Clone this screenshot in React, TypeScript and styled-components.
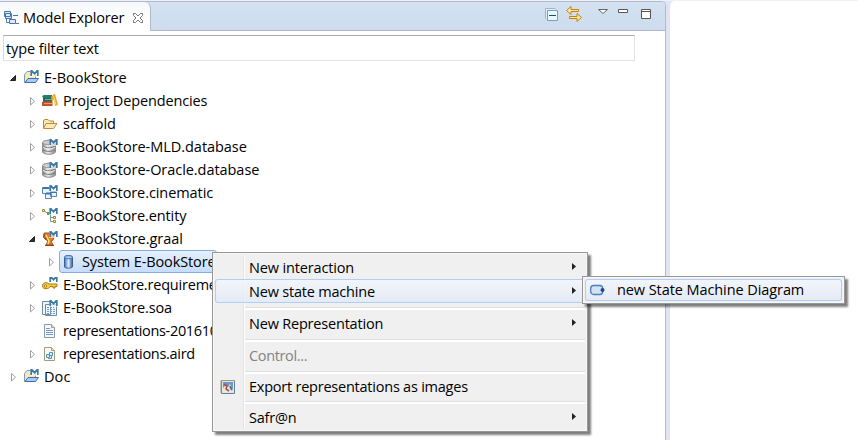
import React from "react";
import styled, { createGlobalStyle, css } from "styled-components";

const Global = createGlobalStyle`
  * { box-sizing: border-box; }
  body { margin: 0; background: #fff; overflow: hidden; }
  svg { display: block; flex: none; }
`;

const Workbench = styled.div`
  position: relative;
  display: flex;
  width: 858px;
  height: 440px;
  padding-top: 1px;
  overflow: hidden;
  background: linear-gradient(#eef1f9 0 1px, #e0e5f6 1px);
  color: #000;
  font: 14.5px/23px "Open Sans", "Noto Sans", sans-serif;
  white-space: pre;
`;

const Text = styled.span<{ $spacing?: number }>`
  letter-spacing: ${(p) => p.$spacing ?? -0.2}px;
`;

const View = styled.section`
  display: flex;
  flex-direction: column;
  width: 666px;
  border: 1px solid #b1b9cb;
  border-width: 1px 1px 0 0;
  border-top-right-radius: 5px;
  background: #fff;
  overflow: hidden;
`;

const TabBar = styled.header`
  display: flex;
  justify-content: space-between;
  flex: none;
  height: 29px;
  background: linear-gradient(#d3e1f0, #cddcee);
  box-shadow: inset 0 -1px #b1b9cb;
`;

const Tab = styled.div`
  display: flex;
  align-items: center;
  width: 151px;
  padding: 2px 0 0 3px;
  border-right: 1px solid #b1b9cb;
  border-top-right-radius: 6px;
  background: linear-gradient(#f5f8fc, #fff 70%);
  line-height: 26px;

  ${Text} { width: 109px; margin-left: 4px; }
`;

const Toolbar = styled.div`
  display: flex;
  align-items: flex-start;
  padding: 4px 13px 0 0;
`;

const ToolSlot = styled.span<{ $width: number; $lift?: number }>`
  width: ${(p) => p.$width}px;
  margin-top: ${(p) => -(p.$lift ?? 0)}px;
`;

const Filter = styled.div`
  flex: none;
  width: 632px;
  height: 26px;
  margin: 4px 0 5px 3px;
  padding: 1px 2px;
  border: 1px solid #e2e3ea;
  border-top-color: #abadb3;
  border-left-color: #d5d9e2;
`;

const TreeRow = styled.div<{ $level: number }>`
  display: flex;
  align-items: center;
  height: 23px;
  padding-left: ${(p) => 9 + p.$level * 19}px;
`;

const Arrow = styled.span`
  display: flex;
  width: 14px;
  flex: none;
`;

const Entry = styled.span<{ $selected?: boolean }>`
  display: flex;
  align-items: center;
  gap: 5px;
  height: 23px;
  ${(p) =>
    p.$selected &&
    css`
      width: 158px;
      margin-left: -2px;
      padding: 0 1px;
      border: 1px solid #84acdd;
      border-radius: 3px;
      background: linear-gradient(#e6f0fd, #c6ddfa);
      line-height: 21px;
    `}
`;

const Editor = styled.main`
  flex: 1;
  margin-left: 4px;
  border-top-left-radius: 5px;
  background: #fff;
`;

const Menu = styled.div<{ $x: number; $y: number; $width: number }>`
  position: absolute;
  left: ${(p) => p.$x}px;
  top: ${(p) => p.$y}px;
  width: ${(p) => p.$width}px;
  padding: 2px;
  border: 1px solid #979797;
  background: #f0f0f0;
  box-shadow: inset 0 0 0 1px #f7f7f7, 3px 3px 2px rgba(0, 0, 0, 0.5);
`;

const Gutter = styled.div`
  background: linear-gradient(90deg, transparent 28px, #e2e3e3 28px 29px, #fff 29px 30px, transparent 30px);
`;

const MenuItem = styled.div<{ $height?: number; $active?: boolean; $disabled?: boolean; $gap?: number }>`
  display: grid;
  grid-template-columns: ${(p) => p.$gap ?? 34}px 1fr 14px;
  align-items: center;
  height: ${(p) => p.$height ?? 24}px;
  line-height: 22px;
  color: ${(p) => (p.$disabled ? "#838383" : "#000")};
  ${(p) =>
    p.$active &&
    css`
      border-radius: 3px;
      box-shadow: inset 0 0 0 1px #aecff7;
      background: linear-gradient(rgba(244, 247, 252, 0.8), rgba(224, 233, 246, 0.8));
    `}

  ${Text} { padding-top: ${(p) => (p.$height ? 0 : 2)}px; }
`;

const ItemIcon = styled.span`
  padding-left: 5px;
`;

const Separator = styled.div<{ $height?: number; $offset?: number }>`
  height: ${(p) => p.$height ?? 8}px;
  padding: ${(p) => p.$offset ?? 4}px 0 0 30px;

  &::before {
    content: "";
    display: block;
    height: 2px;
    border-top: 1px solid #e0e0e0;
    background: #fff;
  }
`;

const Icon = ({ children, size = 16 }: { children: React.ReactNode; size?: number }) => (
  <svg width={size} height={size} viewBox={`0 0 ${size} ${size}`} fill="none">{children}</svg>
);

const ModelMark = ({ x = 7, y = 0 }: { x?: number; y?: number }) => (
  <g transform={`translate(${x} ${y})`}>
    <path d="M0 0H9V8H0Z" fill="#fff" opacity=".6" />
    <path d="M1.2 7V1L4.5 4.8L7.8 1V7" stroke="#3a78a5" strokeWidth="1.7" />
  </g>
);

const ProjectIcon = () => (
  <Icon>
    <path d="M1.5 12.5V4.5L4 1.5H8L9.5 3H12.5V12.5Z" fill="#f9e8b0" stroke="#7798c8" />
    <path d="M2 12.5L5 8.5H15.5L12.5 12.5Z" fill="#abc9ef" stroke="#3f6faf" />
    <ModelMark y={-1} />
  </Icon>
);
const BooksIcon = () => (
  <Icon>
    <path d="M0 3L2 2H10V5H1Z" fill="#23815c" />
    <path d="M1 5H10V9H1Z" fill="#275e79" />
    <path d="M3 6.5H10" stroke="#70bb8d" />
    <path d="M0 9L2 8.5H10.5V13H0Z" fill="#c65327" />
    <path d="M2 10.5H10" stroke="#e5986b" />
    <path d="M9 4L12 1H13L16 12L13 13L12 6L10 9Z" fill="#eba323" />
    <path d="M11.5 3L14 12" stroke="#ffd77d" />
  </Icon>
);
const FolderIcon = () => (
  <Icon>
    <path d="M1.5 12V4.5L3 3.5H6L7.5 5H11.5V7" fill="#fbe8ae" stroke="#ba863b" />
    <path d="M1.5 12.5L4 7.5H15L11.5 12.5Z" fill="#ffeab6" stroke="#c58c3b" />
  </Icon>
);
const DatabaseIcon = () => (
  <Icon>
    <defs>
      <linearGradient id="steel"><stop stopColor="#888" /><stop offset=".4" stopColor="#f0f0f0" /><stop offset="1" stopColor="#888" /></linearGradient>
    </defs>
    <path d="M.5 3.5V13C2 16 12 16 13.5 13V3.5C12 .5 2 .5 .5 3.5Z" fill="url(#steel)" stroke="#8b8d8e" />
    <ellipse cx="7" cy="3.5" rx="6.5" ry="2.2" fill="#ccc" stroke="#999" />
    <path d="M1 7C3 9.5 11 9.5 13 7M1 10.5C3 13 11 13 13 10.5" stroke="#777" />
    <path d="M1 8C3 10.5 11 10.5 13 8" stroke="#eee" />
    <ModelMark y={-1} />
  </Icon>
);
const CinematicIcon = () => (
  <Icon>
    <path d="M.5 2.5H8.5V8.5H.5ZM3.5 8.5H9.5V13.5H3.5ZM8.5 6.5H14.5V11.5H8.5Z" fill="#e9f3ff" stroke="#5b83b6" />
    <path d="M1 3H8M4 8.5H9M9 7H14" stroke="#3e72ad" strokeWidth="1.8" />
    <ModelMark y={-1} />
  </Icon>
);
const EntityIcon = () => (
  <Icon>
    <path d="M3 3.5L6 5.5H8.5V13.5H11M8.5 9.5H11" stroke="#7a9988" />
    <path d="M.5 1.5H2.5V3.5H.5ZM11.5 8.5H13.5V10.5H11.5ZM11.5 12.5H13.5V14.5H11.5Z" fill="#fff8c8" stroke="#a18724" />
    <path d="M5 4H8V7H5Z" fill="#51a071" />
    <ModelMark y={-1} />
  </Icon>
);
const GraalIcon = () => (
  <Icon>
    <path d="M2 2H13L11 9L9 10L11 14H4L6 10L3 8Z" fill="#df8127" stroke="#a84d16" />
    <path d="M4 4L6 8L7 10L6 13" stroke="#ffdf79" strokeWidth="1.5" />
    <path d="M2 3C0 8 4 8 5 8M3 14.5H12" stroke="#9c3d18" />
    <ModelMark y={-1} />
  </Icon>
);
const SystemIcon = () => (
  <Icon>
    <defs><linearGradient id="cylinder"><stop stopColor="#466eb0" /><stop offset=".5" stopColor="#d9edff" /><stop offset="1" stopColor="#305897" /></linearGradient></defs>
    <path d="M3.5 3V13C4 14.5 10 14.5 11.5 13V3C10 1 5 1 3.5 3Z" fill="url(#cylinder)" stroke="#355f9e" />
    <ellipse cx="7.5" cy="3.2" rx="4" ry="1.6" fill="#aacbed" stroke="#4773ae" />
  </Icon>
);
const KeyIcon = () => (
  <Icon>
    <path d="M7 7H15V9.5H13V11H11V9.5H8C7 12.5 1 12.5 .5 9.5C0 5.5 5 4.5 7 7Z" fill="#f5ce3e" stroke="#a87718" />
    <circle cx="3.5" cy="9" r="1.2" fill="#fff" stroke="#a87718" />
    <ModelMark y={-2} />
  </Icon>
);
const SoaIcon = () => (
  <Icon>
    <path d="M.5 1.5H8.5V14.5H.5ZM3.5 4.5H14.5V15.5H3.5Z" fill="#f1f6fa" stroke="#688ca9" />
    <path d="M5 7.5H12M5 9.5H13M5 11.5H13M5 13.5H13" stroke="#739bc0" strokeDasharray="2 1" />
    <ModelMark y={-1} />
  </Icon>
);
const DocumentIcon = ({ diagram = false }: { diagram?: boolean }) => (
  <Icon>
    <path d="M2.5 1.5H9.5L12.5 4.5V14.5H2.5Z" fill="#f5f9ff" stroke={diagram ? "#a59a70" : "#8b98ad"} />
    <path d="M9.5 1.5V4.5H12.5" fill="#ebd79c" stroke="#b59d66" />
    {diagram ? <path d="M7.5 6.5H10.5V9.5H7.5ZM4.5 8.5H7.5V11.5H4.5ZM7.5 9.5H9.5V12.5H6.5V11.5" fill="#d8edf9" stroke="#4c95c1" /> :
      <path d="M4 5.5H8M4 7.5H11M4 9.5H11M4 11.5H11" stroke="#7899c8" />}
  </Icon>
);
const TreeTwist = ({ open }: { open?: boolean }) => (
  <Icon size={10}>{open ? <path d="M6.5 2.5V7.5H1.5Z" fill="#333" stroke="#222" /> : <path d="M2.5 1.5V9L6.5 5.25Z" fill="#fff" stroke="#a0a0a0" />}</Icon>
);
const MenuArrow = () => <Icon size={10}><path d="M1 1V8L5 4.5Z" fill="#222" /></Icon>;

const rows = [
  { label: "E-BookStore", level: 0, icon: <ProjectIcon />, open: true, spacing: -0.03 },
  { label: "Project Dependencies", level: 1, icon: <BooksIcon />, spacing: -0.15 },
  { label: "scaffold", level: 1, icon: <FolderIcon />, spacing: 0 },
  { label: "E-BookStore-MLD.database", level: 1, icon: <DatabaseIcon />, spacing: -0.04 },
  { label: "E-BookStore-Oracle.database", level: 1, icon: <DatabaseIcon />, spacing: -0.05 },
  { label: "E-BookStore.cinematic", level: 1, icon: <CinematicIcon />, spacing: -0.08 },
  { label: "E-BookStore.entity", level: 1, icon: <EntityIcon />, spacing: -0.1 },
  { label: "E-BookStore.graal", level: 1, icon: <GraalIcon />, open: true, spacing: -0.03 },
  { label: "System E-BookStore", level: 2, icon: <SystemIcon />, selected: true, spacing: -0.12 },
  { label: "E-BookStore.requirement", level: 1, icon: <KeyIcon />, spacing: -0.2 },
  { label: "E-BookStore.soa", level: 1, icon: <SoaIcon />, spacing: -0.1 },
  { label: "representations-20161017", level: 1, icon: <DocumentIcon />, leaf: true, spacing: -0.33 },
  { label: "representations.aird", level: 1, icon: <DocumentIcon diagram />, spacing: -0.3 },
  { label: "Doc", level: 0, icon: <ProjectIcon />, spacing: 0.1 },
];

export default function App() {
  return (
    <>
      <Global />
      <Workbench>
        <View>
          <TabBar>
            <Tab>
              <Icon>
                <path d="M1.5 1.5H7.5V6.5H1.5ZM2.5 3.5H8.5V8.5H2.5ZM6.5 9.5H12.5V13.5H6.5Z" fill="#dceaff" stroke="#4875ae" />
                <path d="M10 5.5H15M3.5 9V12.5H6M13 13.5H16" stroke="#4875ae" />
              </Icon>
              <Text $spacing={-0.12}>Model Explorer</Text>
              <Icon size={12}><path d="M1.5 1.5H3.5L6 4L8.5 1.5H10.5V3.5L8 6L10.5 8.5V10.5H8.5L6 8L3.5 10.5H1.5V8.5L4 6L1.5 3.5Z" fill="#fff" stroke="#777" /></Icon>
            </Tab>
            <Toolbar>
              <ToolSlot $width={22}>
                <Icon><path d="M1.5 12.5V2.5H11.5" stroke="#9db6c7" /><path d="M2 3H11V12H2Z" fill="#dfeff8" /><path d="M3.5 4.5H13.5V14.5H3.5Z" fill="#e9f8ff" stroke="#7d9eb6" /><path d="M5 9.5H12" stroke="#10537e" /></Icon>
              </ToolSlot>
              <ToolSlot $width={31}>
                <Icon><path d="M.5 4.5L5 .5V3.5H12.5V5.5H5V8.5ZM15.5 11.5L11 7.5V10.5H3.5V12.5H11V15.5Z" fill="#ffe99e" stroke="#c38213" /></Icon>
              </ToolSlot>
              <ToolSlot $width={20} $lift={1}><Icon size={12}><path d="M1.5 4.5H10.5L6 8.5Z" fill="#fff" stroke="#666" /></Icon></ToolSlot>
              <ToolSlot $width={23} $lift={1}><Icon size={12}><path d="M1.5 4.5H10.5V7.5H1.5Z" fill="#fff" stroke="#555" /></Icon></ToolSlot>
              <ToolSlot $width={12} $lift={1}><Icon size={14}><path d="M1.5 4.5H10.5V13.5H1.5Z" fill="#fff" stroke="#555" /><path d="M1 6.5H11" stroke="#555" /></Icon></ToolSlot>
            </Toolbar>
          </TabBar>
          <Filter><Text $spacing={-0.1}>type filter text</Text></Filter>
          {rows.map((row) => (
            <TreeRow key={row.label} $level={row.level}>
              <Arrow>{!row.leaf && <TreeTwist open={row.open} />}</Arrow>
              <Entry $selected={row.selected}>{row.icon}<Text $spacing={row.spacing}>{row.label}</Text></Entry>
            </TreeRow>
          ))}
        </View>
        <Editor />
        <Menu $x={212} $y={252} $width={376}>
          <Gutter>
            <MenuItem><i /><Text $spacing={-0.15}>New interaction</Text><MenuArrow /></MenuItem>
            <MenuItem $active><i /><Text>New state machine</Text><MenuArrow /></MenuItem>
            <Separator />
            <MenuItem><i /><Text>New Representation</Text><MenuArrow /></MenuItem>
            <Separator />
            <MenuItem $disabled><i /><Text $spacing={-0.35}>Control...</Text></MenuItem>
            <Separator />
            <MenuItem $height={23}>
              <ItemIcon><Icon><path d="M1.5 1.5H14.5V14.5H1.5Z" fill="#d8e6f3" stroke="#687f98" /><path d="M1 14V1.5H14" stroke="#a79965" /><path d="M3 3H13V13H3Z" fill="#669bcb" /><path d="M3 9L6 6L8 8L10 5L13 10V13H3Z" fill="#e9e8df" /><path d="M4 5L7 7L6 10L9 12" stroke="#b54c3c" strokeWidth="1.6" /><path d="M10 7L12 11" stroke="#546c85" strokeWidth="2" /></Icon></ItemIcon>
              <Text $spacing={-0.23}>Export representations as images</Text>
            </MenuItem>
            <Separator $height={7} $offset={3} />
            <MenuItem><i /><Text>Safr@n</Text><MenuArrow /></MenuItem>
          </Gutter>
        </Menu>
        <Menu $x={582} $y={276} $width={263}>
          <Gutter>
            <MenuItem $active $height={22} $gap={32}>
              <ItemIcon><Icon><rect x=".7" y="3.5" width="12" height="9" rx="3" fill="#cfe3f4" stroke="#4c7eb8" strokeWidth="1.3" /><circle cx="12.5" cy="8" r="2" fill="#24488c" /></Icon></ItemIcon>
              <Text $spacing={-0.08}>new State Machine Diagram</Text>
            </MenuItem>
          </Gutter>
        </Menu>
      </Workbench>
    </>
  );
}
